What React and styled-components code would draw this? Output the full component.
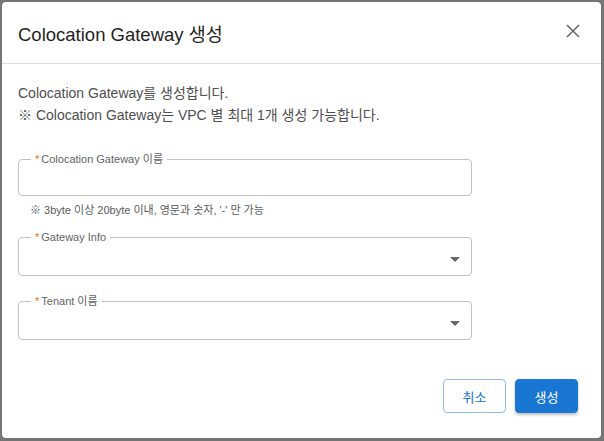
import React from "react";
import styled, { createGlobalStyle } from "styled-components";

const GlobalStyle = createGlobalStyle`
	html, body {
		margin: 0;
		padding: 0;
		background: #757575;
		font-family: "Liberation Sans", "Noto Sans CJK KR", sans-serif;
	}
`;

const Backdrop = styled.div`
	width: 604px;
	height: 441px;
	box-sizing: border-box;
	padding: 2px 3px 3px 2px;
	display: flex;
`;

const Dialog = styled.div`
	flex: 1;
	background: #fff;
	border-radius: 4px;
	display: flex;
	flex-direction: column;
	overflow: hidden;
`;

const Header = styled.div`
	height: 62px;
	box-sizing: border-box;
	padding: 0 16px;
	display: flex;
	align-items: center;
	justify-content: space-between;
	border-bottom: 1px solid #dedede;
`;

const Title = styled.h2`
	margin: 0;
	font-size: 18.5px;
	font-weight: 400;
	color: #1f1f1f;
`;

const CloseButton = styled.button`
	border: 0;
	background: none;
	padding: 0;
	width: 24px;
	height: 24px;
	margin-top: -4px;
	display: flex;
	align-items: center;
	justify-content: center;
	color: #6b6b6b;
	cursor: pointer;
`;

const Content = styled.div`
	flex: 1;
	padding: 18px 16px 0;
`;

const Description = styled.p`
	margin: 0 0 26px;
	font-size: 14px;
	line-height: 22px;
	color: #4e4e4e;
`;

const Field = styled.fieldset`
	margin: 0 0 ${(p) => p.gap}px;
	padding: 0 ${(p) => (p.select ? 4 : 12)}px 0 12px;
	border: 1px solid #c2c2c2;
	border-radius: 4px;
	width: 454px;
	box-sizing: border-box;
`;

const Legend = styled.legend`
	padding: 0 4px;
	font-size: 11px;
	line-height: 14px;
	color: #636363;
`;

const Star = styled.span`
	color: #f26b10;
	margin-right: 2px;
`;

const FieldBody = styled.div`
	height: ${(p) => (p.select ? 32 : 30)}px;
	display: flex;
	align-items: center;
	justify-content: flex-end;
	margin-top: -1px;
`;

const Helper = styled.div`
	margin: 7px 0 13px 12px;
	font-size: 11px;
	line-height: 14px;
	color: #5a5a5a;
`;

const Footer = styled.div`
	display: flex;
	justify-content: flex-end;
	gap: 9px;
	padding: 0 23px 25px 0;
`;

const Button = styled.button`
	width: 63px;
	height: 34px;
	border-radius: 4px;
	font-family: inherit;
	font-size: 13px;
	cursor: pointer;
	border: 1px solid ${(p) => (p.primary ? "#1976d2" : "#8dbbea")};
	background: ${(p) => (p.primary ? "#1976d2" : "#fff")};
	color: ${(p) => (p.primary ? "#fff" : "#1976d2")};
	box-shadow: ${(p) =>
		p.primary ? "0 2px 3px rgba(0,0,0,0.25)" : "none"};
`;

const DropIcon = () => (
	<svg width="24" height="24" viewBox="0 0 24 24" fill="#666">
		<path d="M7 10l5 5 5-5z" />
	</svg>
);

const CloseIcon = () => (
	<svg width="14" height="14" viewBox="0 0 14 14" stroke="currentColor" strokeWidth="1.6">
		<path d="M1 1l12 12M13 1L1 13" />
	</svg>
);

const App = () => {
	return (
		<>
			<GlobalStyle />
			<Backdrop>
				<Dialog>
					<Header>
						<Title>Colocation Gateway 생성</Title>
						<CloseButton>
							<CloseIcon />
						</CloseButton>
					</Header>
					<Content>
						<Description>
							Colocation Gateway를 생성합니다.
							<br />※ Colocation Gateway는 VPC 별 최대 1개 생성 가능합니다.
						</Description>
						<Field gap={0}>
							<Legend>
								<Star>*</Star>Colocation Gateway 이름
							</Legend>
							<FieldBody />
						</Field>
						<Helper>※ 3byte 이상 20byte 이내, 영문과 숫자, '-' 만 가능</Helper>
						<Field gap={18} select>
							<Legend>
								<Star>*</Star>Gateway Info
							</Legend>
							<FieldBody select>
								<DropIcon />
							</FieldBody>
						</Field>
						<Field gap={0} select>
							<Legend>
								<Star>*</Star>Tenant 이름
							</Legend>
							<FieldBody select>
								<DropIcon />
							</FieldBody>
						</Field>
					</Content>
					<Footer>
						<Button>취소</Button>
						<Button primary>생성</Button>
					</Footer>
				</Dialog>
			</Backdrop>
		</>
	);
};

export default App;
